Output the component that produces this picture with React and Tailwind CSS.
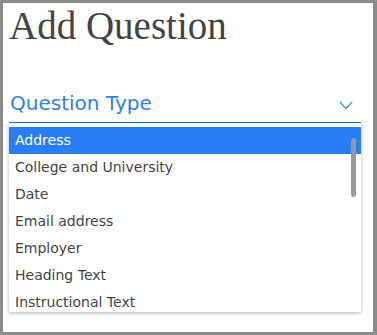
import React from "react";

const items = [
  "Address",
  "College and University",
  "Date",
  "Email address",
  "Employer",
  "Heading Text",
  "Instructional Text",
];

export default function App() {
  return (
    <div className="w-[377px] h-[335px] bg-[#8a8a8a] pt-[3px] pl-[3px] pr-[4px] pb-[3px]">
      <div className="w-full h-full bg-white flex flex-col pl-[6px] pr-[12px]">
        <h1
          className="text-[39px] leading-[46px] text-[#444] pl-[0px]"
          style={{ fontFamily: "'Liberation Serif', serif" }}
        >
          Add Question
        </h1>
        <div className="mt-[42px] flex items-start justify-between pl-[1px] pr-[8px] pb-[7px] border-b border-[#1f6fd6]">
          <span
            className="text-[20px] leading-[24px] text-[#2f7fef]"
            style={{ fontFamily: "Verdana, 'DejaVu Sans', sans-serif" }}
          >
            Question Type
          </span>
          <svg width="14" height="9" viewBox="0 0 14 9" className="mt-[10px]">
            <path d="M0.7 0.7 L7 7.7 L13.3 0.7" fill="none" stroke="#2f7fef" strokeWidth="1.2" />
          </svg>
        </div>
        <div
          className="relative h-[189px] pt-[4px] overflow-hidden bg-white shadow-[0_1px_4px_rgba(0,0,0,0.3)]"
          style={{ fontFamily: "Verdana, 'DejaVu Sans', sans-serif" }}
        >
          {items.map((t, i) => (
            <div
              key={t}
              className={
                "h-[27px] flex items-center pl-[6px] text-[14px] " +
                (i === 0 ? "bg-[#2a7ef5] text-white" : "text-[#444]")
              }
            >
              {t}
            </div>
          ))}
          <div className="absolute right-[5px] top-[15px] w-[5px] h-[59px] rounded-full bg-[#999]" />
        </div>
      </div>
    </div>
  );
}
